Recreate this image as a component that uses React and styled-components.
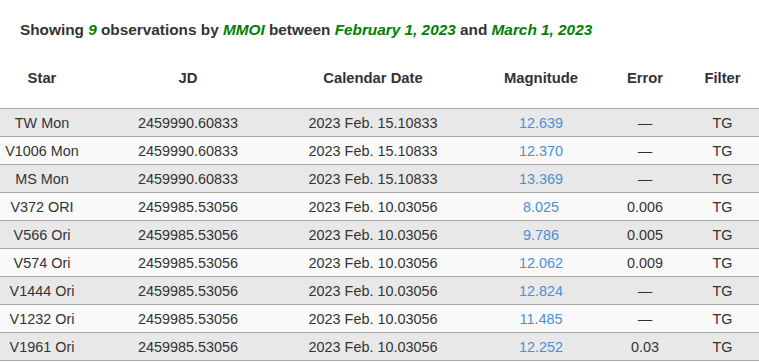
import React from "react";
import styled, { createGlobalStyle } from "styled-components";

const GlobalStyle = createGlobalStyle`
  body {
    margin: 0;
    background: #ffffff;
    font-family: "Liberation Sans", Arial, sans-serif;
    color: #333333;
  }
`;

const Page = styled.div`
  padding-top: 20px;
`;

const Title = styled.h3`
  margin: 0 0 8px 20px;
  font-size: 15.35px;
  line-height: 20px;
  font-weight: bold;
  color: #333333;
`;

const Hl = styled.em`
  color: #008000;
  font-style: italic;
`;

const Table = styled.table`
  width: 100%;
  border-collapse: collapse;
  table-layout: fixed;
  font-size: 14.4px;
`;

const HeadCell = styled.th`
  height: 60px;
  padding: 0 ${(p) => p.$pr || 0}px 0 0;
  font-size: 14.8px;
  font-weight: bold;
  text-align: center;
  border-bottom: 1px solid #a8a8a8;
  color: #333333;
`;

const Row = styled.tr`
  background: ${(p) => (p.$odd ? "#e8e8e8" : "#f9f9f9")};
  border-bottom: 1px solid #a8a8a8;
`;

const Cell = styled.td`
  height: 27px;
  padding: 0 ${(p) => p.$pr || 0}px 0 0;
  text-align: center;
  color: ${(p) => (p.$mag ? "#4a90d6" : "#333333")};
`;

const columns = [
  { label: "Star", width: 112, pr: 28 },
  { label: "JD", width: 152 },
  { label: "Calendar Date", width: 218 },
  { label: "Magnitude", width: 118 },
  { label: "Error", width: 90 },
  { label: "Filter", width: 69, pr: 4 },
];

const rows = [
  ["TW Mon", "2459990.60833", "2023 Feb. 15.10833", "12.639", "—"],
  ["V1006 Mon", "2459990.60833", "2023 Feb. 15.10833", "12.370", "—"],
  ["MS Mon", "2459990.60833", "2023 Feb. 15.10833", "13.369", "—"],
  ["V372 ORI", "2459985.53056", "2023 Feb. 10.03056", "8.025", "0.006"],
  ["V566 Ori", "2459985.53056", "2023 Feb. 10.03056", "9.786", "0.005"],
  ["V574 Ori", "2459985.53056", "2023 Feb. 10.03056", "12.062", "0.009"],
  ["V1444 Ori", "2459985.53056", "2023 Feb. 10.03056", "12.824", "—"],
  ["V1232 Ori", "2459985.53056", "2023 Feb. 10.03056", "11.485", "—"],
  ["V1961 Ori", "2459985.53056", "2023 Feb. 10.03056", "12.252", "0.03"],
];

export default function App() {
  return (
    <Page>
      <GlobalStyle />
      <Title>
        Showing <Hl>9</Hl> observations by <Hl>MMOI</Hl> between{" "}
        <Hl>February 1, 2023</Hl> and <Hl>March 1, 2023</Hl>
      </Title>
      <Table>
        <colgroup>
          {columns.map((c) => (
            <col key={c.label} style={{ width: c.width }} />
          ))}
        </colgroup>
        <thead>
          <tr>
            {columns.map((c) => (
              <HeadCell key={c.label} $pr={c.pr}>
                {c.label}
              </HeadCell>
            ))}
          </tr>
        </thead>
        <tbody>
          {rows.map((r, i) => (
            <Row key={r[0]} $odd={i % 2 === 0}>
              <Cell $pr={28}>{r[0]}</Cell>
              <Cell>{r[1]}</Cell>
              <Cell>{r[2]}</Cell>
              <Cell $mag>{r[3]}</Cell>
              <Cell>{r[4]}</Cell>
              <Cell $pr={4}>TG</Cell>
            </Row>
          ))}
        </tbody>
      </Table>
    </Page>
  );
}
